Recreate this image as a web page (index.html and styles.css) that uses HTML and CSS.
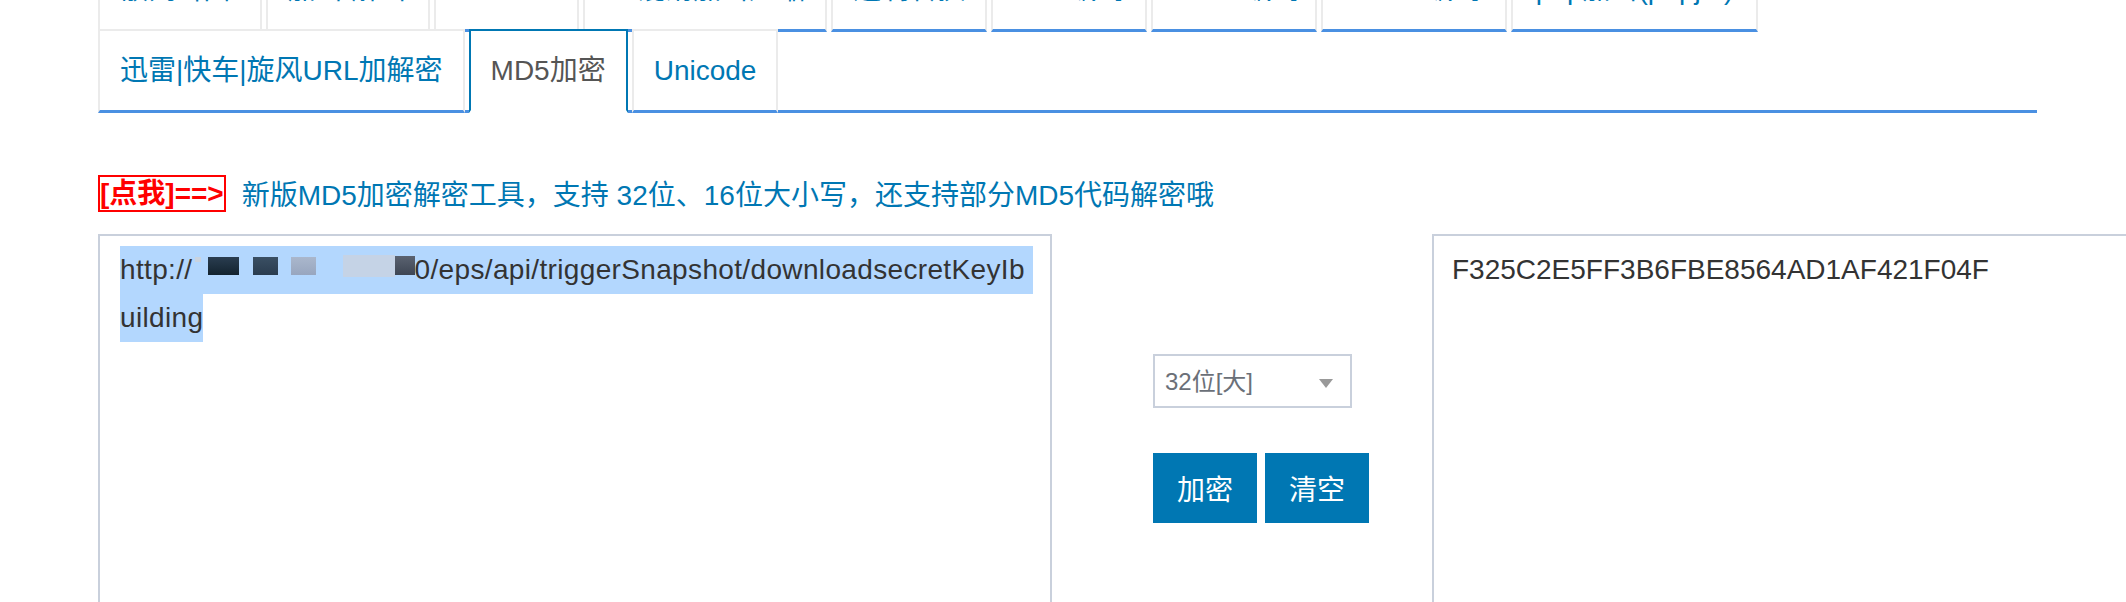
FILE: index.html
```
<!DOCTYPE html>
<html lang="zh-CN">
<head>
    <meta charset="UTF-8">
    <title>MD5加密</title>
    <link rel="stylesheet" href="styles.css">
</head>
<body>
    <div class="page">
        <ul class="tabs">
            <li>散列/哈希</li>
            <li>加密/解密</li>
            <li class="wide">Base64</li>
            <li>JS混淆加密压缩</li>
            <li>进制转换</li>
            <li>URL编码</li>
            <li class="narrow">HTML编码</li>
            <li class="wide">UTF-8编码</li>
            <li class="wide">php加密(phpjm)</li>
            <li>迅雷|快车|旋风URL加解密</li>
            <li class="active">MD5加密</li>
            <li>Unicode</li>
        </ul>

        <div class="notice">
            <span class="notice-btn">[点我]==&gt;</span>
            <span class="notice-text">新版MD5加密解密工具，支持 32位、16位大小写，还支持部分MD5代码解密哦</span>
        </div>

        <div class="work">
            <div class="box box-in">
                <div class="sel-line">http://<span class="mosaic"></span>0/eps/api/triggerSnapshot/downloadsecretKeyIb</div>
                <div class="sel-line">uilding</div>
            </div>
            <div class="ctrl">
                <div class="select">
                    <select>
                        <option>32位[大]</option>
                        <option>32位[小]</option>
                        <option>16位[大]</option>
                        <option>16位[小]</option>
                    </select>
                </div>
                <div class="buttons">
                    <button>加密</button>
                    <button>清空</button>
                </div>
            </div>
            <div class="box box-out">F325C2E5FF3B6FBE8564AD1AF421F04F</div>
        </div>
    </div>
</body>
</html>
```

FILE: styles.css
```
html, body {
    margin: 0;
    overflow: hidden;
    background: #fff;
}

body {
    font-family: "Liberation Sans", "Noto Sans CJK SC", sans-serif;
    color: #333;
}

.page {
    margin: -52px 0 0 98px;
    width: 1939px;
}

.tabs {
    display: flex;
    flex-wrap: wrap;
    list-style: none;
    margin: 0;
    padding: 0;
    border-bottom: 3px solid #4a90e2;
}

.tabs li {
    box-sizing: border-box;
    height: 84px;
    margin: 0 4px -3px 0;
    padding: 0 20px;
    border: 2px solid #ebebeb;
    border-bottom: 3px solid #4a90e2;
    background: #fff;
    font-size: 28px;
    line-height: 79px;
    color: #0077b3;
    white-space: nowrap;
}

.tabs li.wide {
    padding: 0 23px;
}

.tabs li.narrow {
    padding: 0 15px;
}

.tabs li.active {
    border-color: #0077b3;
    border-bottom-color: #fff;
    color: #555;
}

.notice {
    display: flex;
    align-items: center;
    margin-top: 60px;
    font-size: 28px;
}

.notice-btn {
    border: 2px solid #f00;
    line-height: 33px;
    font-weight: bold;
    color: #f00;
}

.notice-text {
    margin-left: 16px;
    color: #0077b3;
}

.work {
    display: flex;
    align-items: flex-start;
    margin-top: 21px;
}

.box {
    box-sizing: border-box;
    flex-shrink: 0;
    width: 954px;
    height: 420px;
    border: 2px solid #c9d0dc;
    font-size: 28px;
    line-height: 48px;
    color: #333;
}

.box-in {
    padding: 10px 20px;
    letter-spacing: 0.35px;
}

.box-out {
    padding: 10px 18px;
}

.sel-line {
    width: fit-content;
    padding-right: 8px;
    background: #b3d7fe;
    white-space: nowrap;
}

.sel-line + .sel-line {
    padding-right: 0;
}

.mosaic {
    display: inline-block;
    width: 222px;
    height: 48px;
    vertical-align: top;
    background:
        linear-gradient(#2a3d50, #13232f) 15px 11px / 31px 18px no-repeat,
        linear-gradient(#3a4f63, #2a3c4f) 60px 11px / 25px 18px no-repeat,
        linear-gradient(#aab7cc, #98a6bf) 98px 11px / 25px 18px no-repeat,
        linear-gradient(#c5d3e6, #c5d3e6) 150px 9px / 52px 22px no-repeat,
        linear-gradient(#5a6270, #3e4654) 194px 10px / 28px 19px no-repeat,
        linear-gradient(#c9d3df, #c9d3df) 2px 11px / 6px 5px no-repeat;
}

.ctrl {
    box-sizing: border-box;
    flex-shrink: 0;
    width: 380px;
    padding: 120px 0 0 101px;
}

.select {
    position: relative;
    box-sizing: border-box;
    width: 199px;
    height: 54px;
    border: 2px solid #c9d0dc;
}

.select select {
    appearance: none;
    width: 100%;
    height: 100%;
    margin: 0;
    padding: 0 0 0 10px;
    border: none;
    background: transparent;
    font-family: inherit;
    font-size: 24px;
    color: #6b7078;
    outline: none;
}

.select::after {
    content: "";
    position: absolute;
    right: 17px;
    top: 23px;
    border-left: 7.5px solid transparent;
    border-right: 7.5px solid transparent;
    border-top: 9px solid #999;
    pointer-events: none;
}

.buttons {
    display: flex;
    gap: 8px;
    margin-top: 45px;
}

.buttons button {
    width: 104px;
    height: 70px;
    padding: 0;
    border: none;
    background: #0077b3;
    font-family: inherit;
    font-size: 28px;
    color: #fff;
    cursor: pointer;
}
```
